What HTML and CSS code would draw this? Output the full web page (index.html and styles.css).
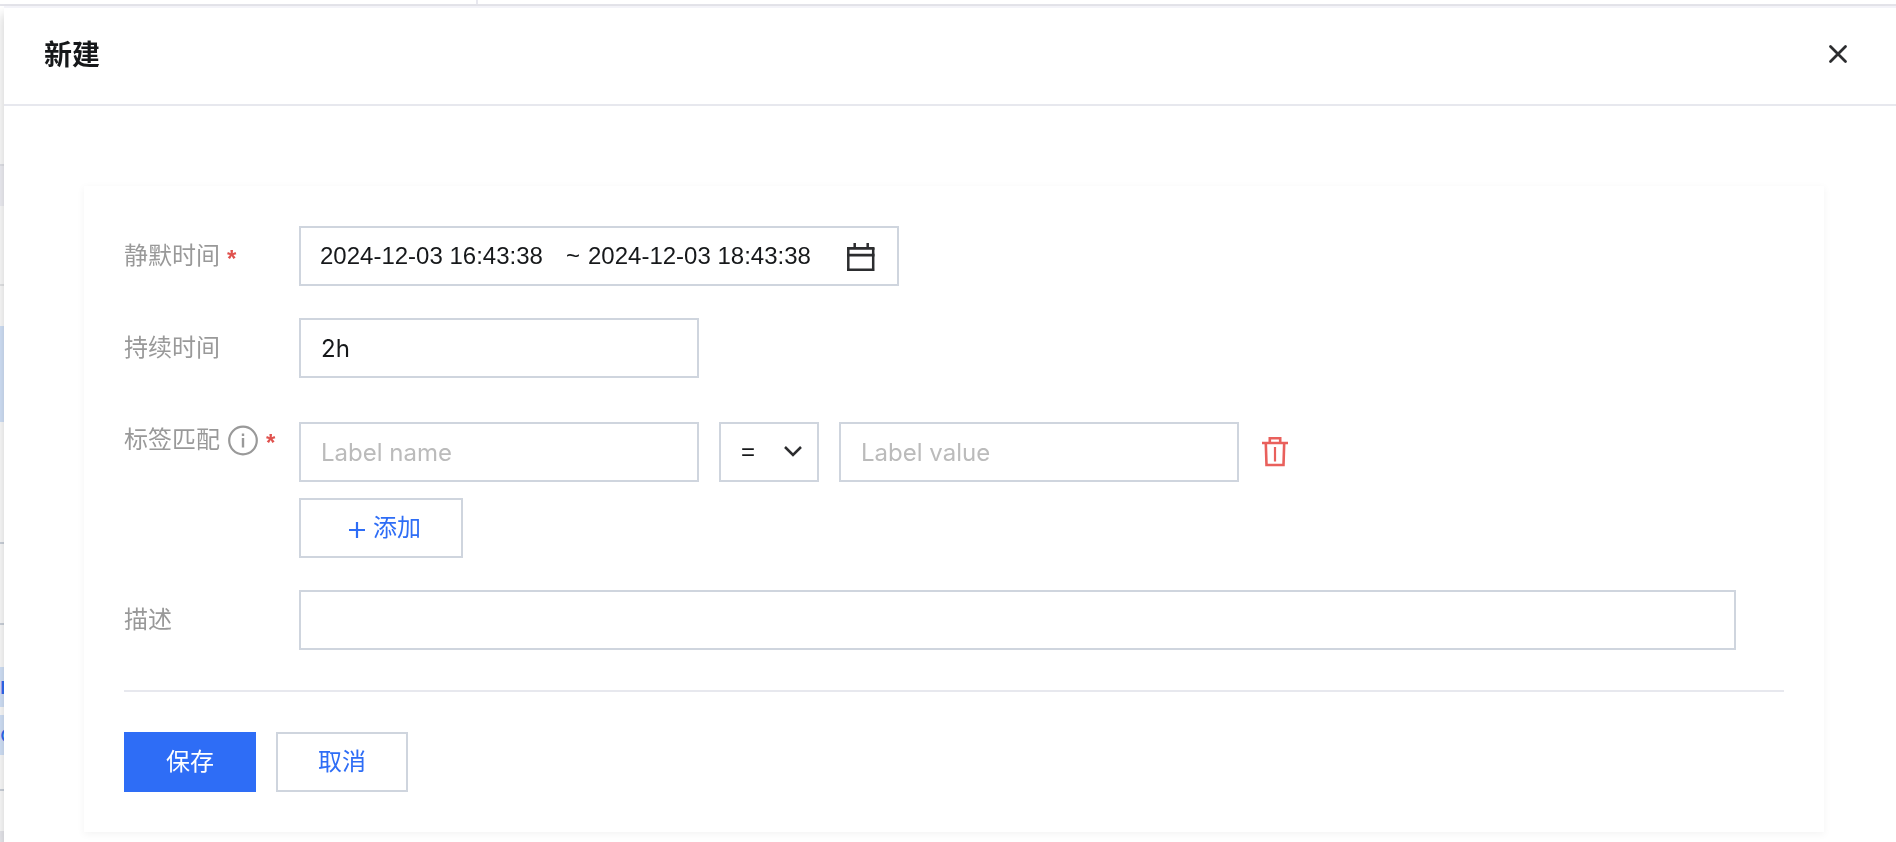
FILE: index.html
```html
<!DOCTYPE html>
<html lang="zh-CN">
<head>
    <meta charset="UTF-8">
    <meta name="viewport" content="width=device-width, initial-scale=1.0">
    <title>新建</title>
    <link rel="stylesheet" href="styles.css">
</head>
<body>
    <!-- List page under the drawer -->
    <div class="page" aria-hidden="true">
        <div class="page-top"></div>
        <div class="page-space"></div>
        <div class="page-thead"></div>
        <div class="page-row row-first"></div>
        <div class="page-row row-selected"><div class="selected"></div></div>
        <div class="page-row row-plain"></div>
        <div class="page-row row-tags">
            <span class="tag tag-bold">r</span>
            <span class="tag">o</span>
        </div>
        <div class="page-row row-last"></div>
        <div class="page-foot"></div>
    </div>

    <div class="drawer" role="dialog" aria-labelledby="drawer-title">
        <header class="drawer-header">
            <h1 id="drawer-title">新建</h1>
            <button class="icon-btn" type="button" aria-label="关闭">
                <svg width="32" height="32" viewBox="0 0 32 32" fill="none" stroke="#2c2d2f" stroke-width="2.8" stroke-linecap="round">
                    <path d="M8.5 8.5L23.5 23.5M23.5 8.5L8.5 23.5"/>
                </svg>
            </button>
        </header>

        <form class="card">
            <div class="form-row">
                <label class="form-label" for="start-time">静默时间<span class="required">*</span></label>
                <div class="date-range">
                    <input id="start-time" class="date-input" type="text" value="2024-12-03 16:43:38">
                    <span class="tilde">~</span>
                    <input class="date-input" type="text" value="2024-12-03 18:43:38" aria-label="结束时间">
                    <svg class="calendar" width="32" height="32" viewBox="0 0 32 32" fill="none" stroke="#2c2d2f">
                        <path stroke-width="2.8" d="M2 8.4H29.5M2 15.2H29.5"/>
                        <path stroke-width="2.5" d="M3.3 8V30.5M28.2 8V30.5M2 29.8H29.5M9.7 3V8M22.7 3V8"/>
                    </svg>
                </div>
            </div>

            <div class="form-row">
                <label class="form-label" for="duration">持续时间</label>
                <input id="duration" class="input" type="text" value="2h">
            </div>

            <div class="form-row">
                <label class="form-label" for="label-name">标签匹配
                    <svg class="info" width="32" height="32" viewBox="0 0 32 32" fill="none" stroke="#999">
                        <circle cx="16" cy="16.5" r="13.8" stroke-width="2.2"/>
                        <path d="M16 14V23.5M16 9.5V12" stroke-width="2.4"/>
                    </svg>
                    <span class="required">*</span>
                </label>
                <div class="matchers">
                    <div class="matcher">
                        <input id="label-name" class="input" type="text" placeholder="Label name">
                        <div class="select-box">
                            <select class="select" aria-label="匹配方式">
                                <option>=</option>
                            </select>
                            <svg class="chevron" width="20" height="12" viewBox="0 0 20 12" fill="none" stroke="#2c2d2f" stroke-width="2.5">
                                <path d="M2 1L10 9L18 1"/>
                            </svg>
                        </div>
                        <input class="input" type="text" placeholder="Label value" aria-label="Label value">
                        <button class="icon-btn" type="button" aria-label="删除">
                            <svg width="32" height="32" viewBox="0 0 32 32" fill="none" stroke="#e9605c" stroke-width="2.6">
                                <path d="M3 7H29M10.8 7V2.2H21.2V7M6.8 7L7.5 29H24.5L25.2 7"/>
                                <path d="M16 11V25.5" stroke-width="2.2"/>
                            </svg>
                        </button>
                    </div>
                    <button class="btn btn-add" type="button">
                        <svg class="plus" width="16" height="20" viewBox="0 0 16 20" stroke="#2e6df6" stroke-width="2.2">
                            <path d="M8 4V20M0 12H16"/>
                        </svg>
                        添加
                    </button>
                </div>
            </div>

            <div class="form-row">
                <label class="form-label" for="description">描述</label>
                <input id="description" class="input input-full" type="text">
            </div>

            <div class="actions">
                <button class="btn btn-primary" type="submit">保存</button>
                <button class="btn" type="button">取消</button>
            </div>
        </form>
    </div>
</body>
</html>
```
FILE: styles.css
```css
* {
    box-sizing: border-box;
}
body {
    margin: 0;
    min-height: 100vh;
    overflow: hidden;
    background: #fff;
    color: #16181a;
    font-family: Inter, "Noto Sans CJK SC", sans-serif;
    font-size: 24px;
    line-height: 36px;
}
h1 {
    margin: 0;
    padding-top: 2px;
    font-size: 28px;
    font-weight: 700;
    line-height: 40px;
}
input, select, button {
    font: inherit;
    color: inherit;
    border-radius: 0;
}

/* Page under the drawer */
.page {
    height: 100vh;
    overflow: hidden;
}
.page-top {
    width: 478px;
    height: 4px;
    border-right: 2px solid #e8e8ef;
}
.page-space {
    height: 162px;
    border-top: 2px solid #e4e4ea;
    border-bottom: 2px solid #e4e5eb;
}
.page-thead {
    height: 40px;
    background: #f2f2f8;
}
.page-row {
    border-bottom: 2px solid #cfd5de;
}
.row-first {
    height: 80px;
    border-color: #e7e8ea;
}
.row-selected {
    height: 258px;
    padding-top: 40px;
}
.selected {
    height: 96px;
    background: #d5e5fc;
}
.row-plain {
    height: 81px;
}
.row-tags {
    display: flex;
    flex-direction: column;
    gap: 8px;
    height: 166px;
    padding-top: 42px;
}
.tag {
    height: 40px;
    background: #d5e5fc;
    color: #2e6df6;
    line-height: 38px;
}
.tag-bold {
    font-weight: 700;
}
.row-last {
    height: 40px;
    border-bottom: 0;
}
.page-foot {
    height: 40px;
    background: #ebebf0;
}

/* Drawer */
.drawer {
    position: fixed;
    top: 8px;
    right: 0;
    bottom: 0;
    left: 4px;
    background: #fff;
    box-shadow: 0 -2px 0 #f3f3f8, -2px 6px 10px rgba(0, 0, 0, 0.16);
}
.drawer-header {
    display: flex;
    align-items: center;
    justify-content: space-between;
    padding: 25px 42px 29px 40px;
    border-bottom: 2px solid #e7e8ee;
}
.icon-btn {
    display: flex;
    padding: 0;
    border: 0;
    background: none;
    cursor: pointer;
}

/* Form */
.card {
    display: flex;
    flex-direction: column;
    gap: 32px;
    margin: 80px 72px 0 80px;
    padding: 40px;
    box-shadow: 0 2px 8px rgba(0, 0, 0, 0.05);
}
.form-row {
    display: flex;
    align-items: flex-start;
}
.form-label {
    display: flex;
    flex: none;
    align-items: center;
    width: 175px;
    height: 60px;
    color: #999;
}
.required {
    margin-left: 7px;
    padding-top: 6px;
    color: #e0524e;
    font-family: "Liberation Sans", Arial, sans-serif;
    font-weight: 700;
}
.info {
    margin-left: 7px;
}
.input, .date-range, .select, .btn {
    height: 60px;
    border: 2px solid #cfd5de;
    background: #fff;
}
.input {
    width: 400px;
    padding: 0 20px;
}
.input::placeholder {
    color: #bbb;
    opacity: 1;
}
.input-full {
    flex: 1;
    margin-right: 48px;
}
.date-range {
    display: flex;
    align-items: center;
    width: 600px;
    padding: 0 20px 0 19px;
    font-family: "Liberation Sans", Arial, sans-serif;
}
.date-input {
    width: 228px;
    padding: 0;
    border: 0;
    background: none;
}
.tilde {
    margin: 0 8px 0 18px;
}
.calendar {
    margin-left: auto;
}
.matchers {
    display: flex;
    flex-direction: column;
    align-items: flex-start;
    gap: 16px;
    padding-top: 12px;
}
.matcher {
    display: flex;
    align-items: center;
    gap: 20px;
}
.select-box {
    position: relative;
}
.select {
    display: block;
    width: 100px;
    padding: 0 20px;
    appearance: none;
    font-family: "Liberation Sans", Arial, sans-serif;
}
.chevron {
    position: absolute;
    top: 24px;
    right: 16px;
    pointer-events: none;
}
.btn {
    display: flex;
    align-items: center;
    justify-content: center;
    gap: 8px;
    min-width: 132px;
    color: #2e6df6;
    cursor: pointer;
}
.btn-add {
    min-width: 164px;
    padding: 0 4px 0 12px;
}
.btn-primary {
    border-color: #2e6df6;
    background: #2e6df6;
    color: #fff;
}
.actions {
    display: flex;
    gap: 20px;
    margin-top: 8px;
    padding-top: 40px;
    border-top: 2px solid #e7e8ee;
}
```
